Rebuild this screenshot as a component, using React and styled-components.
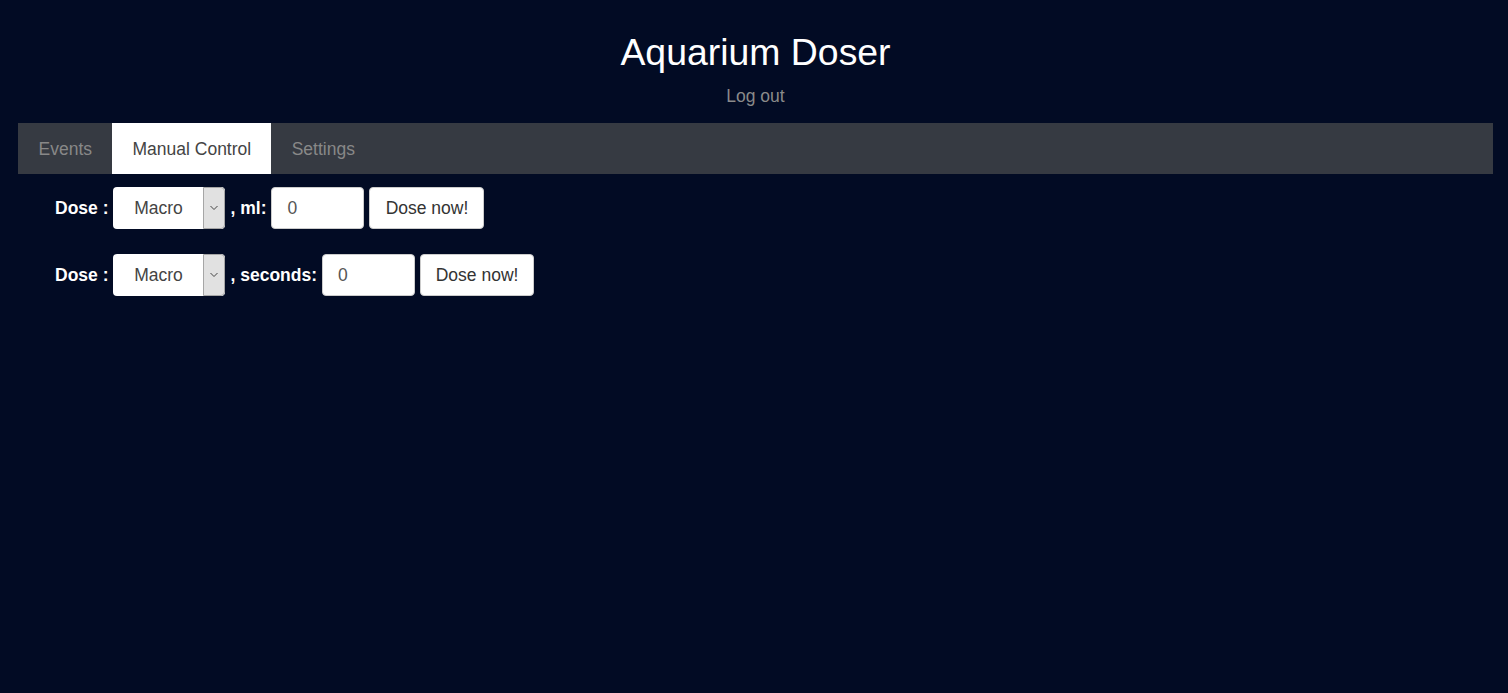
import React, { useState } from 'react';
import styled, { createGlobalStyle } from 'styled-components';

const GlobalStyle = createGlobalStyle`
    html, body {
        margin: 0;
        padding: 0;
        background-color: #020b24;
        font-family: "Liberation Sans", Arial, sans-serif;
    }
`;

const Page = styled.div`
    min-height: 693px;
    padding: 0 15px 0 18px;
`;

const Header = styled.header`
    text-align: center;
    padding-top: 30px;

    h1 {
        margin: 0;
        font-size: 37.4px;
        font-weight: 400;
        color: #fff;
        line-height: 44px;
    }
`;

const LogoutLink = styled.a`
    display: inline-block;
    margin-top: 12px;
    font-size: 17.5px;
    color: #8a8a8a;
    text-decoration: none;
    line-height: 20px;
`;

const TabBar = styled.nav`
    display: flex;
    margin-top: 17px;
    height: 51px;
    background-color: #363a42;
`;

const Tab = styled.button`
    border: none;
    padding: 1px 20px 0 20.5px;
    font-family: inherit;
    font-size: 17.5px;
    cursor: pointer;
    background-color: ${p => (p.$active ? '#fff' : 'transparent')};
    color: ${p => (p.$active ? '#444' : '#888')};
`;

const Content = styled.div`
    padding: 13px 0 0 37px;
    display: flex;
    flex-direction: column;
    gap: 25px;
`;

const Row = styled.div`
    display: flex;
    align-items: center;
    gap: 5px;
    height: 42px;
`;

const Label = styled.span`
    color: #fff;
    font-weight: 700;
    font-size: 17.5px;
`;

const SelectBox = styled.div`
    display: flex;
    width: 112px;
    height: 42px;
    box-sizing: border-box;
    background: #fff;
    border-radius: 4px;
    overflow: hidden;

    select {
        flex: 1;
        min-width: 0;
        appearance: none;
        border: none;
        background: transparent;
        font-family: inherit;
        font-size: 17.5px;
        color: #444;
        text-align: center;
        text-align-last: center;
        outline: none;
    }
`;

const Arrow = styled.span`
    width: 22px;
    display: flex;
    align-items: center;
    justify-content: center;
    background: #e1e1e1;
    border: 1px solid #a6a6a6;
    border-radius: 0 4px 4px 0;
    box-sizing: border-box;
`;

const NumberInput = styled.input`
    width: 93px;
    height: 42px;
    box-sizing: border-box;
    border: 1px solid #ccc;
    border-radius: 4px;
    padding: 0 15px;
    font-family: inherit;
    font-size: 17.5px;
    color: #555;
`;

const DoseButton = styled.button`
    height: 42px;
    width: ${p => p.$w || 115}px;
    box-sizing: border-box;
    border: 1px solid #ccc;
    border-radius: 4px;
    background: #fff;
    font-family: inherit;
    font-size: 17.5px;
    color: #333;
    cursor: pointer;
`;

const PumpSelect = () => (
    <SelectBox>
        <select defaultValue="Macro">
            <option>Macro</option>
            <option>Micro</option>
        </select>
        <Arrow>
            <svg width="10" height="6" viewBox="0 0 10 6" fill="none" stroke="#444" strokeWidth="1">
                <path d="M1.5 1l3.5 3.5L8.5 1" />
            </svg>
        </Arrow>
    </SelectBox>
);

const App = () => {
    const [tab, setTab] = useState('Manual Control');
    const tabs = ['Events', 'Manual Control', 'Settings'];

    return (
        <Page>
            <GlobalStyle />
            <Header>
                <h1>Aquarium Doser</h1>
                <LogoutLink href="#">Log out</LogoutLink>
            </Header>
            <TabBar>
                {tabs.map(t => (
                    <Tab key={t} $active={tab === t} onClick={() => setTab(t)}>
                        {t}
                    </Tab>
                ))}
            </TabBar>
            <Content>
                <Row>
                    <Label>Dose :</Label>
                    <PumpSelect />
                    <Label>, ml:</Label>
                    <NumberInput type="text" defaultValue="0" />
                    <DoseButton>Dose now!</DoseButton>
                </Row>
                <Row>
                    <Label>Dose :</Label>
                    <PumpSelect />
                    <Label>, seconds:</Label>
                    <NumberInput type="text" defaultValue="0" />
                    <DoseButton $w={114}>Dose now!</DoseButton>
                </Row>
            </Content>
        </Page>
    );
};

export default App;
